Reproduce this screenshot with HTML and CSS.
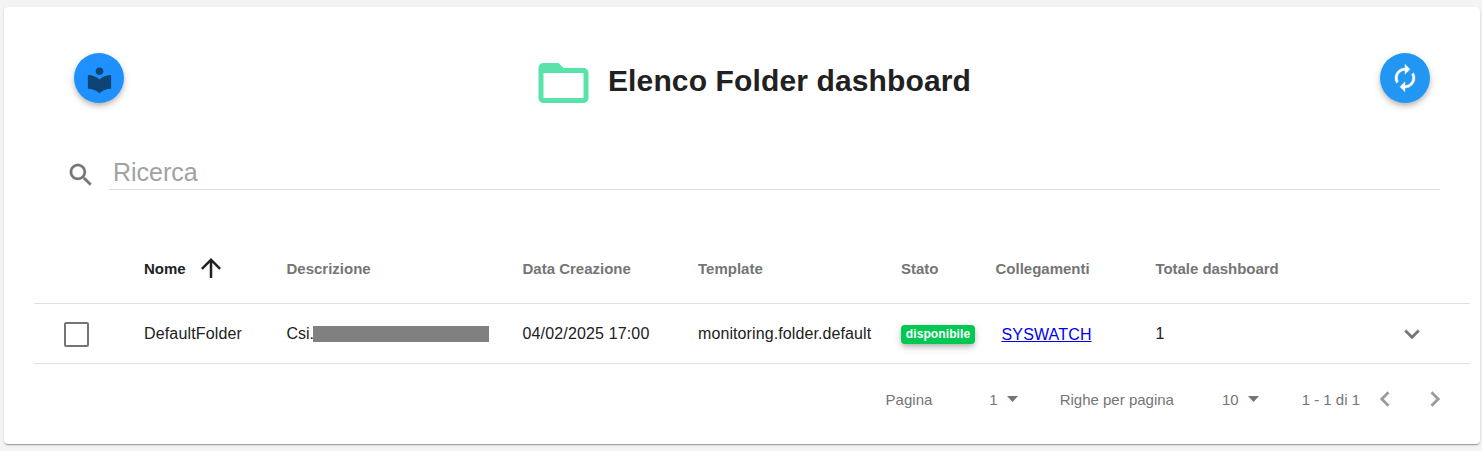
FILE: index.html
```html
<!DOCTYPE html>
<html lang="it">
<head>
<meta charset="utf-8">
<title>Elenco Folder dashboard</title>
<link rel="stylesheet" href="styles.css">
</head>
<body>
<main class="card">
  <header class="toolbar">
    <button class="fab fab-docs" aria-label="Guida"><svg width="31" height="30" viewBox="0 0 24 24" preserveAspectRatio="none"><path d="M12 11.550C9.640 9.350 6.480 8 3 8v11c3.480 0 6.640 1.350 9 3.550 2.360-2.190 5.520-3.550 9-3.550V8c-3.480 0-6.640 1.350-9 3.550zM12 8c1.660 0 3-1.340 3-3s-1.340-3-3-3-3 1.340-3 3 1.340 3 3 3z"/></svg></button>
    <div class="heading">
      <svg class="folder" viewBox="0 0 24 24"><path d="M20 6h-8l-2-2H4c-1.100 0-1.990.9-1.990 2L2 18c0 1.100.9 2 2 2h16c1.100 0 2-.9 2-2V8c0-1.100-.9-2-2-2zm0 12H4V8h16v10z"/></svg>
      <h1>Elenco Folder dashboard</h1>
    </div>
    <button class="fab fab-refresh" aria-label="Aggiorna"><svg width="30" height="30" viewBox="0 0 24 24"><path d="M12 6v3l4-4-4-4v3c-4.420 0-8 3.580-8 8 0 1.570.46 3.030 1.240 4.260L6.700 14.800c-.45-.83-.7-1.790-.7-2.800 0-3.310 2.690-6 6-6zm6.760 1.740L17.300 9.200c.44.84.7 1.790.7 2.800 0 3.310-2.690 6-6 6v-3l-4 4 4 4v-3c4.420 0 8-3.580 8-8 0-1.570-.46-3.030-1.240-4.260z"/></svg></button>
  </header>
  <div class="search">
    <svg width="30" height="30" viewBox="0 0 24 24"><path d="M15.500 14h-.79l-.28-.27C15.410 12.590 16 11.110 16 9.500 16 5.910 13.090 3 9.500 3S3 5.910 3 9.500 5.910 16 9.500 16c1.610 0 3.090-.59 4.230-1.570l.27.28v.79l5 4.990L20.490 19l-4.990-5zm-6 0C7.010 14 5 11.990 5 9.500S7.010 5 9.500 5 14 7.010 14 9.500 11.990 14 9.500 14z"/></svg>
    <div class="search-field">Ricerca</div>
  </div>
  <section class="table">
    <div class="row head">
      <span></span>
      <span class="sorted">Nome <svg width="30" height="30" viewBox="0 0 24 24"><path d="M4 12l1.410 1.410L11 7.830V20h2V7.830l5.580 5.590L20 12l-8-8-8 8z"/></svg></span>
      <span>Descrizione</span>
      <span>Data Creazione</span>
      <span>Template</span>
      <span>Stato</span>
      <span>Collegamenti</span>
      <span class="total">Totale dashboard</span>
      <span></span>
    </div>
    <div class="row body">
      <span class="check"><i class="box"></i></span>
      <span>DefaultFolder</span>
      <span class="description">Csi.<i class="redacted"></i></span>
      <span>04/02/2025 17:00</span>
      <span class="template">monitoring.folder.default</span>
      <span><b class="chip">disponibile</b></span>
      <span class="link"><a href="#">SYSWATCH</a></span>
      <span>1</span>
      <span class="expand"><svg width="30" height="30" viewBox="0 0 24 24"><path d="M7.410 8.590L12 13.170l4.590-4.580L18 10l-6 6-6-6 1.410-1.410z"/></svg></span>
    </div>
  </section>
  <footer class="pager">
    <span>Pagina</span>
    <span class="page-select">1<svg class="caret" width="11" height="6" viewBox="0 0 11 6"><path d="M0 0h11L5.500 6z"/></svg></span>
    <span>Righe per pagina</span>
    <span class="rows-select">10<svg class="caret" width="11" height="6" viewBox="0 0 11 6"><path d="M0 0h11L5.500 6z"/></svg></span>
    <span class="range">1 - 1 di 1</span>
    <svg class="prev" width="30" height="30" viewBox="0 0 24 24"><path d="M15.410 7.410L14 6l-6 6 6 6 1.410-1.410L10.830 12z"/></svg>
    <svg class="next" width="30" height="30" viewBox="0 0 24 24"><path d="M10 6L8.590 7.410 13.170 12l-4.580 4.590L10 18l6-6z"/></svg>
  </footer>
</main>
</body>
</html>
```
FILE: styles.css
```css
* { box-sizing: border-box; }
body {
  margin: 0;
  padding: 7px 2px 7px 4px;
  background: #f4f4f4;
  font-family: "Liberation Sans", Arial, sans-serif;
  color: #212121;
}
svg { display: block; flex: none; fill: currentColor; }
.card {
  height: 437px;
  padding: 46px 10px 0 30px;
  background: #fff;
  border-radius: 4px;
  box-shadow: 0 2px 1px -1px rgba(0,0,0,.2), 0 1px 1px rgba(0,0,0,.14), 0 1px 3px rgba(0,0,0,.12);
}
.toolbar {
  display: flex;
  justify-content: space-between;
  height: 60px;
  padding: 0 40px;
}
.fab {
  display: flex;
  align-items: center;
  justify-content: center;
  width: 50px;
  height: 50px;
  padding: 0;
  border: 0;
  border-radius: 50%;
  box-shadow: 0 3px 5px -1px rgba(0,0,0,.2), 0 3px 8px rgba(0,0,0,.16);
}
.fab-docs { background: #1e90ff; color: #0f4373; padding-top: 4px; }
.fab-refresh { background: #2196f3; color: #fff; }
.fab-refresh path { stroke: currentColor; stroke-width: .3; }
.heading { display: flex; gap: 14px; }
.folder { width: 61px; height: 60px; color: #58e3a9; }
h1 {
  margin: 0;
  font-size: 30px;
  line-height: 56px;
  letter-spacing: .13px;
  white-space: nowrap;
}
.search {
  display: flex;
  gap: 13px;
  height: 37px;
  margin-top: 40px;
  padding: 0 30px 0 32px;
  color: #757575;
}
.search svg { margin-top: 7px; }
.search path { stroke: currentColor; stroke-width: .2; }
.search-field {
  flex: 1;
  padding-left: 4px;
  border-bottom: 1px solid #dedede;
  font-size: 25px;
  line-height: 38px;
  color: #a2a2a2;
}
.table { margin-top: 44px; }
.row {
  display: grid;
  grid-template-columns: 110px 142.500px 236px 175.500px 203px 94.500px 160px 1fr 73px;
  align-items: center;
  border-bottom: 1px solid #e0e0e0;
  white-space: nowrap;
}
.head { height: 70px; font-size: 15px; font-weight: bold; color: #757575; }
.sorted { display: flex; align-items: center; gap: 10px; color: #212121; }
.sorted svg { margin-bottom: 1px; }
.total { letter-spacing: -.05px; }
.body { height: 60px; font-size: 16px; letter-spacing: .15px; }
.check { padding: 2px 0 0 30px; }
.box {
  display: block;
  width: 25px;
  height: 25px;
  border: 2px solid #757575;
  border-radius: 2px;
}
.description { display: flex; align-items: center; letter-spacing: 0; }
.redacted { width: 176px; height: 16px; margin-left: -1px; background: #808080; }
.template { letter-spacing: .1px; }
.chip {
  display: block;
  width: 74px;
  height: 19px;
  margin-top: 2px;
  border-radius: 4px;
  background: #00c853;
  color: #fff;
  font-size: 12px;
  line-height: 18px;
  letter-spacing: .1px;
  text-align: center;
  box-shadow: 0 3px 5px -1px rgba(0,0,0,.2), 0 3px 8px rgba(0,0,0,.16);
}
.link { padding: 2px 0 0 6px; }
.link a { color: #0000ee; }
.expand { color: #757575; }
.expand path { stroke: currentColor; stroke-width: .3; }
.pager {
  display: flex;
  align-items: center;
  height: 70px;
  padding-right: 20px;
  justify-content: flex-end;
  font-size: 15px;
  color: #757575;
}
.page-select, .rows-select { display: flex; align-items: center; gap: 9px; }
.page-select { margin: 0 42px 0 57px; }
.rows-select { margin: 0 43px 0 48px; }
.range { margin-right: 10px; }
.prev, .next { color: #9a9a9a; }
.prev path, .next path { stroke: currentColor; stroke-width: .3; }
.prev { margin-right: 20px; }
```
